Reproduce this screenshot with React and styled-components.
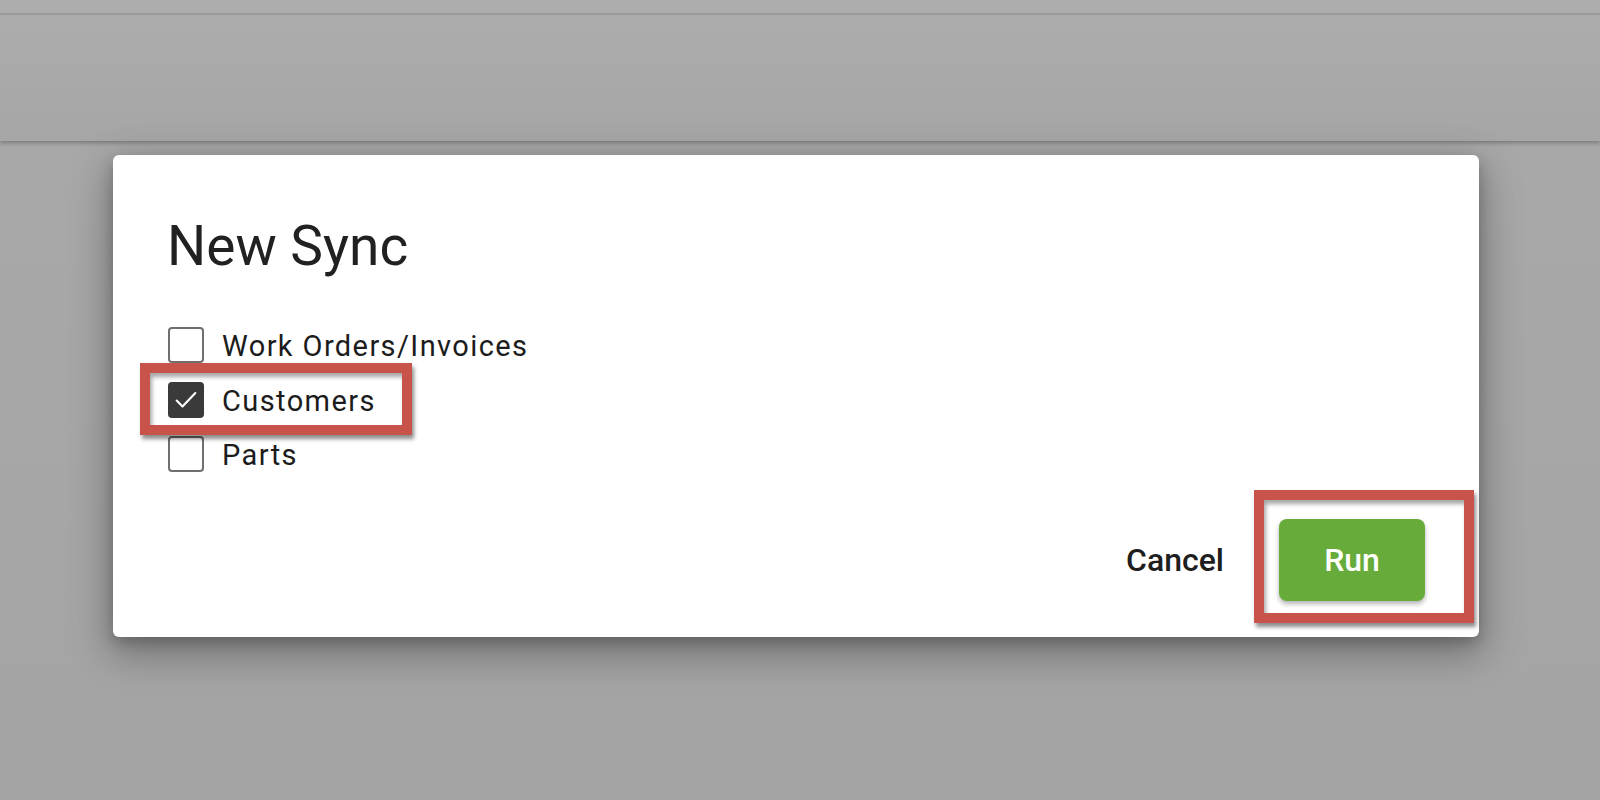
import React, { useState } from "react";
import styled, { createGlobalStyle } from "styled-components";

const Global = createGlobalStyle`
  html, body { margin: 0; padding: 0; }
  body {
    background: #a6a6a6;
    font-family: Roboto, "Liberation Sans", Arial, sans-serif;
    overflow: hidden;
  }
`;

const Page = styled.div`
  width: 1600px;
  height: 800px;
  background: linear-gradient(180deg, #a9a9a9 0%, #a4a4a4 100%);
  display: flex;
  flex-direction: column;
`;

const TopStrip = styled.div`
  height: 13px;
  background: #adadad;
  border-bottom: 2px solid #9d9d9d;
`;

const AppBar = styled.div`
  height: 126px;
  background: linear-gradient(180deg, #acacac 0%, #a6a6a6 100%);
  box-shadow: 0 2px 4px rgba(0, 0, 0, 0.28);
  position: relative;
  z-index: 1;
`;

const Dialog = styled.div`
  position: relative;
  z-index: 2;
  margin: 14px 0 0 113px;
  width: 1366px;
  height: 482px;
  box-sizing: border-box;
  background: #ffffff;
  border-radius: 6px;
  box-shadow: 0 14px 40px 4px rgba(0, 0, 0, 0.3), 0 6px 14px rgba(0, 0, 0, 0.2);
  padding: 64px 54px 36px 55px;
  display: flex;
  flex-direction: column;
`;

const Title = styled.h2`
  margin: 0 0 0 -1px;
  font-size: 55px;
  line-height: 54px;
  font-weight: 400;
  color: #212121;
  letter-spacing: 0;
`;

const Options = styled.div`
  margin-top: 45px;
  display: flex;
  flex-direction: column;
`;

const Row = styled.label`
  height: 54.5px;
  display: flex;
  align-items: center;
  gap: 18px;
  cursor: pointer;
`;

const Box = styled.span`
  width: 36px;
  height: 36px;
  box-sizing: border-box;
  border-radius: 4px;
  border: ${(p) => (p.$checked ? "none" : "2.5px solid #6f6f6f")};
  background: ${(p) => (p.$checked ? "#3a3a3a" : "#ffffff")};
  display: flex;
  align-items: center;
  justify-content: center;
  flex: none;
`;

const Label = styled.span`
  font-size: 29px;
  color: #1c1c1c;
  letter-spacing: 1.4px;
  padding-top: 2px;
`;

const Footer = styled.div`
  margin-top: auto;
  display: flex;
  justify-content: flex-end;
  align-items: center;
  gap: 47px;
`;

const TextButton = styled.button`
  border: none;
  background: none;
  font-family: inherit;
  font-size: 32px;
  font-weight: 500;
  color: #1e1e1e;
  padding: 0 8px;
  cursor: pointer;
`;

const RunButton = styled.button`
  width: 146px;
  height: 82px;
  border: none;
  border-radius: 8px;
  background: #67ab3a;
  color: #ffffff;
  font-family: inherit;
  font-size: 32px;
  font-weight: 500;
  box-shadow: 0 3px 5px rgba(0, 0, 0, 0.3);
  cursor: pointer;
`;

const Highlight = styled.div`
  position: absolute;
  left: ${(p) => p.$x}px;
  top: ${(p) => p.$y}px;
  width: ${(p) => p.$w}px;
  height: ${(p) => p.$h}px;
  box-sizing: border-box;
  border: 10px solid #c8534a;
  box-shadow: 2px 4px 4px rgba(0, 0, 0, 0.45), inset 2px 4px 4px rgba(0, 0, 0, 0.35);
  pointer-events: none;
`;

const Check = () => (
  <svg width="28" height="28" viewBox="0 0 24 24" fill="none">
    <path d="M4 12.5l5 5L20 6" stroke="#ffffff" strokeWidth="1.8" strokeLinecap="round" strokeLinejoin="round" />
  </svg>
);

export default function App() {
  const [checked, setChecked] = useState({ wo: false, cust: true, parts: false });
  const items = [
    { key: "wo", label: "Work Orders/Invoices" },
    { key: "cust", label: "Customers" },
    { key: "parts", label: "Parts" },
  ];
  return (
    <>
      <Global />
      <Page>
        <TopStrip />
        <AppBar />
        <Dialog>
          <Title>New Sync</Title>
          <Options>
            {items.map((it) => (
              <Row key={it.key} onClick={() => setChecked((c) => ({ ...c, [it.key]: !c[it.key] }))}>
                <Box $checked={checked[it.key]}>{checked[it.key] && <Check />}</Box>
                <Label>{it.label}</Label>
              </Row>
            ))}
          </Options>
          <Footer>
            <TextButton>Cancel</TextButton>
            <RunButton>Run</RunButton>
          </Footer>
          <Highlight $x={27} $y={208} $w={272} $h={72} />
          <Highlight $x={1141} $y={335} $w={220} $h={133} />
        </Dialog>
      </Page>
    </>
  );
}
